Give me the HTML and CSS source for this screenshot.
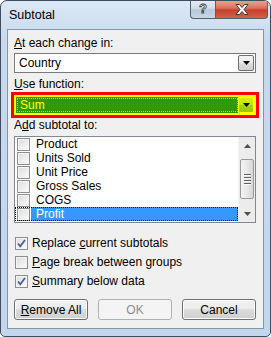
FILE: index.html
```html
<!DOCTYPE html>
<html lang="en">
	<head>
		<meta charset="UTF-8" />
		<meta name="viewport" content="width=device-width, initial-scale=1.0" />
		<title>Subtotal</title>

		<link rel="stylesheet" href="styles.css">
	</head>
	<body>
		<div class="window">
			<div class="titlebar">
				<span class="title">Subtotal</span>
				<div class="capBtns">
					<span class="cap help">?</span>
					<span class="cap close">
						<svg width="14" height="11" viewBox="0 0 14 11">
							<path d="M1 0.5 H4.5 L7 3.5 L9.5 0.5 H13 L9 5.5 L13 10.5 H9.5 L7 7.5 L4.5 10.5 H1 L5 5.5 Z" fill="#fff" stroke="#3b3b3b" stroke-width="1" stroke-linejoin="round"/>
						</svg>
					</span>
				</div>
			</div>

			<div class="client">
				<div class="label"><u>A</u>t each change in:</div>
				<div class="combo">
					<span class="comboTxt">Country</span>
					<span class="drop">
						<svg width="7" height="4" viewBox="0 0 7 4"><path d="M0 0 H7 L3.5 4 Z" fill="#000"/></svg>
					</span>
				</div>

				<div class="label label2"><u>U</u>se function:</div>
				<div class="combo hl">
					<span class="comboTxt"><span class="focusRect">Sum</span></span>
					<span class="drop">
						<svg width="7" height="4" viewBox="0 0 7 4"><path d="M0 0 H7 L3.5 4 Z" fill="#000"/></svg>
					</span>
				</div>

				<div class="label label3">A<u>d</u>d subtotal to:</div>
				<div class="listbox">
					<ul class="items">
						<li><span class="check"></span><span class="itemTxt">Product</span></li>
						<li><span class="check"></span><span class="itemTxt">Units Sold</span></li>
						<li><span class="check"></span><span class="itemTxt">Unit Price</span></li>
						<li><span class="check"></span><span class="itemTxt">Gross Sales</span></li>
						<li><span class="check"></span><span class="itemTxt">COGS</span></li>
						<li class="selected"><span class="check"></span><span class="itemTxt">Profit</span></li>
					</ul>
					<div class="scrollbar">
						<span class="arrow">
							<svg width="7" height="4" viewBox="0 0 7 4"><path d="M0 4 H7 L3.5 0 Z" fill="#4d4d4d"/></svg>
						</span>
						<div class="track">
							<span class="thumb">
								<span class="grip"></span>
								<span class="grip"></span>
								<span class="grip"></span>
								<span class="grip"></span>
							</span>
						</div>
						<span class="arrow">
							<svg width="7" height="4" viewBox="0 0 7 4"><path d="M0 0 H7 L3.5 4 Z" fill="#4d4d4d"/></svg>
						</span>
					</div>
				</div>

				<div class="options">
					<div class="opt">
						<span class="check checked">
							<svg width="11" height="11" viewBox="0 0 11 11"><path d="M2 5.5 L4.3 8.3 L9 2" fill="none" stroke="#4a5e9a" stroke-width="1.8"/></svg>
						</span>
						<span>Replace <u>c</u>urrent subtotals</span>
					</div>
					<div class="opt">
						<span class="check"></span>
						<span><u>P</u>age break between groups</span>
					</div>
					<div class="opt">
						<span class="check checked">
							<svg width="11" height="11" viewBox="0 0 11 11"><path d="M2 5.5 L4.3 8.3 L9 2" fill="none" stroke="#4a5e9a" stroke-width="1.8"/></svg>
						</span>
						<span><u>S</u>ummary below data</span>
					</div>
				</div>

				<div class="buttons">
					<button class="btn"><u>R</u>emove All</button>
					<button class="btn" disabled>OK</button>
					<button class="btn">Cancel</button>
				</div>
			</div>
		</div>
	</body>
</html>
```

FILE: styles.css
```css
* {
	padding: 0;
	margin: 0;
	box-sizing: border-box;
}
ul {
	list-style: none;
}

body {
	width: 271px;
	height: 337px;
	font-family: "Liberation Sans", Arial, sans-serif;
	font-size: 12px;
	color: #000;
	background: #fff;
}

.window {
	width: 271px;
	height: 337px;
	display: flex;
	flex-direction: column;
	border: 1px solid #3f4d5e;
	border-radius: 7px 7px 5px 5px;
	background: linear-gradient(to bottom, #dce8f6 0, #c6d9ef 40px, #c2d6ee 100%);
	overflow: hidden;
}

.titlebar {
	height: 28px;
	display: flex;
	justify-content: space-between;
	align-items: flex-start;
	flex-shrink: 0;
}
.title {
	padding: 7px 0 0 8px;
	line-height: 14px;
	font-size: 12.5px;
}
.capBtns {
	display: flex;
	margin-right: 2px;
	margin-top: -1px;
}
.cap {
	height: 19px;
	display: flex;
	align-items: center;
	justify-content: center;
	border: 1px solid #55606e;
	border-top: none;
}
.help {
	width: 25px;
	border-radius: 0 0 0 4px;
	border-right: none;
	background: linear-gradient(to bottom, #e7edf4 0, #d3dde9 45%, #b9c8da 55%, #c8d6e6 100%);
	color: #fff;
	font-weight: bold;
	font-size: 13px;
	-webkit-text-stroke: 0.8px #3a3a3a;
	padding-bottom: 1px;
}
.close {
	width: 53px;
	border-radius: 0 0 4px 0;
	background: linear-gradient(to bottom, #e9a798 0, #d9735f 45%, #c7412b 55%, #d2604b 100%);
}

.client {
	flex: 1;
	margin: 0 6px 7px;
	border: 1px solid #8595a8;
	background: #f0f0f0;
	padding: 6px 7px 0 6px;
	display: flex;
	flex-direction: column;
}

.label {
	line-height: 15px;
}
.label2 {
	margin-top: 4px;
}
.label3 {
	margin-top: 3px;
}

.combo {
	height: 20px;
	margin-top: 2px;
	display: flex;
	border: 1px solid #7a7a7a;
	background: #fff;
	padding: 1px;
}
.comboTxt {
	flex: 1;
	padding-left: 3px;
	line-height: 16px;
}
.drop {
	width: 16px;
	display: flex;
	align-items: center;
	justify-content: center;
	border: 1px solid #707070;
	border-radius: 2px;
	background: linear-gradient(to bottom, #f2f2f2 0, #ebebeb 50%, #dddddd 50%, #cfcfcf 100%);
}

.combo.hl {
	margin-top: 3px;
	border: 2px solid #ffff00;
	outline: 3px solid #ff0000;
	background: #339900;
	padding: 0;
}
.combo.hl .comboTxt {
	padding: 1px 0 1px 1px;
	line-height: 14px;
	color: #ffff00;
}
.focusRect {
	display: block;
	height: 14px;
	padding-left: 2px;
	line-height: 12px;
	border: 1px dotted #c8d800;
}
.combo.hl .drop {
	width: 16px;
	border: 1px solid #ffff00;
	border-radius: 0;
	background: linear-gradient(to bottom, #d4f000 0, #c3e400 50%, #a6d200 50%, #9acb00 100%);
}

.listbox {
	margin-top: 3px;
	height: 87px;
	display: flex;
	border: 1px solid #828790;
	background: #fff;
}
.items {
	flex: 1;
}
.items li {
	height: 14px;
	display: flex;
	align-items: center;
	padding-left: 2px;
}
.itemTxt {
	flex: 1;
	height: 14px;
	line-height: 14px;
	margin-left: 1px;
	padding-left: 5px;
}
.items li.selected {
	outline: 1px dotted #000;
	outline-offset: -1px;
}
.items li.selected .itemTxt {
	background: #3399ff;
	color: #fff;
}

.check {
	width: 13px;
	height: 13px;
	flex-shrink: 0;
	display: flex;
	align-items: center;
	justify-content: center;
	border: 1px solid #8e8f8f;
	background: linear-gradient(135deg, #dcdcdc 0, #f2f2f2 70%, #ffffff 100%);
	box-shadow: inset 0 0 0 1px #f4f4f4;
}

.scrollbar {
	width: 17px;
	display: flex;
	flex-direction: column;
	background: #ececec;
	border-left: 1px solid #f4f4f4;
}
.arrow {
	height: 17px;
	display: flex;
	align-items: center;
	justify-content: center;
}
.track {
	flex: 1;
	display: flex;
	align-items: center;
	padding: 0 1px;
}
.thumb {
	width: 100%;
	height: 40px;
	display: flex;
	flex-direction: column;
	align-items: center;
	justify-content: center;
	gap: 2px;
	border: 1px solid #9a9a9a;
	border-radius: 2px;
	background: linear-gradient(to right, #f3f3f3 0, #e8e8e8 50%, #d6d6d6 100%);
	margin-top: -2px;
}
.grip {
	width: 7px;
	height: 1px;
	background: #5e5e5e;
	box-shadow: 0 1px 0 #f8f8f8;
}

.options {
	margin-top: 11px;
}
.opt {
	height: 19px;
	display: flex;
	align-items: center;
	gap: 4px;
	padding-left: 1px;
	line-height: 15px;
}

.buttons {
	margin-top: 8px;
	display: flex;
	justify-content: space-between;
}
.btn {
	width: 74px;
	height: 21px;
	font-family: inherit;
	font-size: 12px;
	color: #000;
	border: 1px solid #707070;
	border-radius: 3px;
	background: linear-gradient(to bottom, #f2f2f2 0, #ebebeb 50%, #dddddd 50%, #cfcfcf 100%);
	box-shadow: inset 0 0 0 1px #fbfbfb;
}
.btn:disabled {
	color: #8c8c8c;
	border-color: #adb2b5;
	background: #f4f4f4;
	box-shadow: none;
}
```
